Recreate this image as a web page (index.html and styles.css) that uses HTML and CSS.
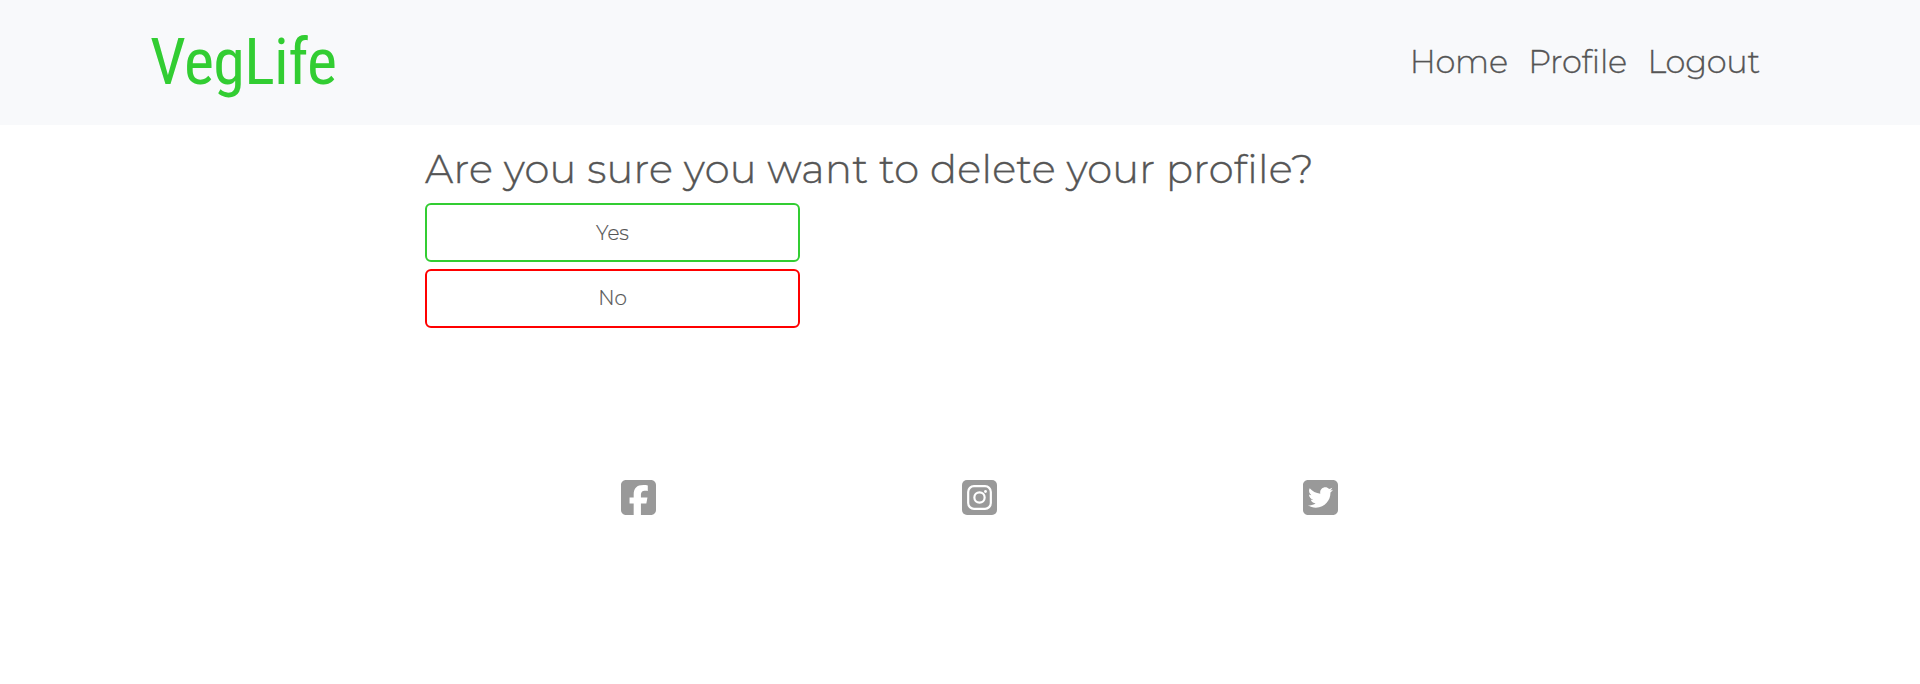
FILE: index.html
```html
<!DOCTYPE html>
<html lang="en">
<head>
<meta charset="utf-8">
<title>VegLife</title>
<link rel="stylesheet" href="styles.css">
</head>
<body>
<header class="navbar">
  <a class="brand" href="#">VegLife</a>
  <nav class="links">
    <a href="#">Home</a>
    <a href="#">Profile</a>
    <a href="#">Logout</a>
  </nav>
</header>
<main class="content">
  <h1 class="title">Are you sure you want to delete your profile?</h1>
  <button class="btn btn-yes">Yes</button>
  <button class="btn btn-no">No</button>
</main>
<footer class="social">
  <a href="#" aria-label="Facebook"><svg class="icon" viewBox="0 32 448 448"><path d="M64 32C28.7 32 0 60.7 0 96V416c0 35.3 28.7 64 64 64h98.2V334.2H109.4V256h52.8V222.3c0-87.1 39.4-127.5 125-127.5c16.2 0 44.2 3.2 55.7 6.4V172c-6-.6-16.5-1-29.6-1c-42 0-58.2 15.9-58.2 57.2V256h83.6l-14.4 78.2H255V480H384c35.3 0 64-28.7 64-64V96c0-35.3-28.7-64-64-64H64z"/></svg></a>
  <a href="#" aria-label="Instagram"><svg class="icon" viewBox="0 32 448 448"><rect y="32" width="448" height="448" rx="64"/><rect class="line" x="79" y="111" width="290" height="290" rx="74"/><circle class="line" cx="224" cy="256" r="66"/><circle class="dot" cx="301" cy="179" r="18"/></svg></a>
  <a href="#" aria-label="Twitter"><svg class="icon" viewBox="0 32 448 448"><path d="M64 32C28.7 32 0 60.7 0 96V416c0 35.3 28.7 64 64 64H384c35.3 0 64-28.7 64-64V96c0-35.3-28.7-64-64-64H64zM351.1 190.8c.2 2.8.2 5.7.2 8.5 0 86.7-66 186.6-186.6 186.6-37.2 0-71.7-10.8-100.7-29.4 5.3.6 10.4.8 15.8.8 30.7 0 58.9-10.4 81.4-28-28.8-.6-53-19.5-61.3-45.5 10.1 1.5 19.2 1.5 29.6-1.2-30-6.1-52.5-32.5-52.5-64.4v-.8c8.7 4.9 18.9 7.9 29.6 8.3a65.447 65.447 0 0 1-29.2-54.6c0-12.2 3.2-23.4 8.9-33.1 32.3 39.8 80.8 65.8 135.2 68.6-9.3-44.5 24-80.6 64-80.6 18.9 0 35.9 7.9 47.9 20.7 14.8-2.8 29-8.3 41.6-15.8-4.9 15.2-15.2 28-28.8 36.1 13.2-1.4 26-5.1 37.8-10.2-8.9 13.1-20.1 24.7-32.9 34z"/></svg></a>
</footer>
</body>
</html>
```
FILE: styles.css
```css
* { box-sizing: border-box; }
body {
  margin: 0;
  background: #fff;
  color: #555;
  font-family: Montserrat, Inter, sans-serif;
  font-weight: 300;
}
a { color: inherit; text-decoration: none; }
.navbar {
  display: flex;
  justify-content: space-between;
  align-items: center;
  height: 125px;
  padding: 0 160px 2px 150px;
  background: #f8f9fb;
}
.brand {
  padding-top: 2px;
  color: #32cd32;
  font: 400 64px/96px "Roboto Condensed", Roboto, sans-serif;
  font-stretch: 75%;
  letter-spacing: -0.6px;
}
.links {
  display: flex;
  gap: 20.5px;
  font-size: 32px;
  line-height: 48px;
  letter-spacing: -0.25px;
  -webkit-text-stroke: 0.3px;
}
.content {
  display: flex;
  flex-direction: column;
  align-items: flex-start;
  width: 1070px;
  margin-left: 425px;
  padding-top: 20px;
}
.title {
  margin: 0 0 10px;
  font-size: 40px;
  font-weight: inherit;
  line-height: 48px;
  letter-spacing: 0.28px;
  white-space: nowrap;
  -webkit-text-stroke: 0.4px;
}
.btn {
  width: 375px;
  height: 59px;
  margin-bottom: 7px;
  padding: 0 0 1px;
  border: 2px solid;
  border-radius: 6px;
  background: #fff;
  color: #555;
  font: inherit;
  font-size: 20px;
  -webkit-text-stroke: 0.2px;
}
.btn-yes { padding: 1px 0 0; border-color: #32cd32; }
.btn-no { border-color: #f00; }
.social {
  display: grid;
  grid-template-columns: repeat(3, 341px);
  justify-items: center;
  width: 1023px;
  margin: 145.4px 0 0 468.3px;
}
.icon { display: block; width: 35px; height: 35px; fill: #999; }
.icon .line { fill: none; stroke: #fff; stroke-width: 28; }
.icon .dot { fill: #fff; }
```
